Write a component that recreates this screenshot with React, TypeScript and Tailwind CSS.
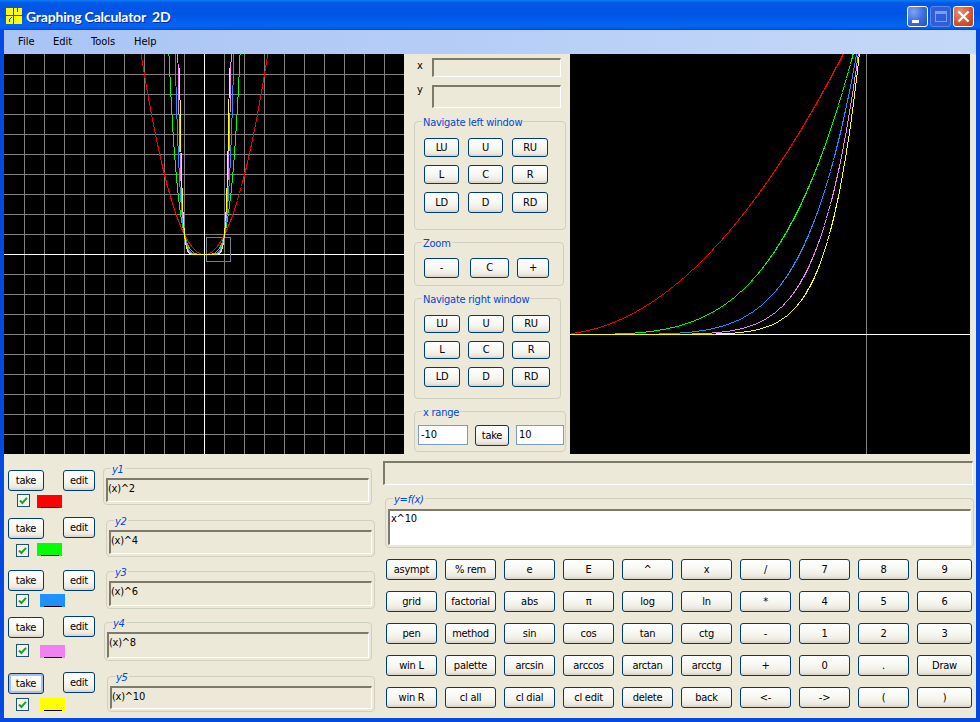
import React from "react";

const FONT = "font-['DejaVu_Sans_Condensed','DejaVu_Sans',sans-serif]";
const BTN =
  "flex items-center justify-center rounded-[3px] border border-[#003c74] bg-[linear-gradient(180deg,#ffffff_0%,#f6f6f1_55%,#ece9df_85%,#d6d0c5_100%)] text-[11px] tracking-[-0.25px] leading-none text-black pb-[1px]";
const SUNKEN =
  "border-t-2 border-l-2 border-r border-b border-t-[#7c7a6a] border-l-[#7c7a6a] border-r-white border-b-white";
const GROUP = "relative rounded-[4px] border border-[#d0d0bf]";
const LEGEND =
  "absolute -top-[6px] left-[7px] bg-[#ece9d8] px-[1px] text-[11px] tracking-[-0.25px] leading-[14px] text-[#0046d5]";

function Btn({ c, children }: { c: string; children: React.ReactNode }) {
  return <div className={`${BTN} ${c}`}>{children}</div>;
}

const COLORS = ["#ff0000", "#00ff00", "#1e90ff", "#ee82ee", "#ffff00"];
const POWERS = [2, 4, 6, 8, 10];

function leftPoints(n: number) {
  const pts: string[] = [];
  for (let px = -70; px <= 70; px++) {
    const y = 200 - 20 * Math.pow(px / 20, n);
    if (y < -30) continue;
    pts.push(`${200 + px + 0.5},${Math.round(y) + 0.5}`);
  }
  return pts.join(" ");
}

function rightPoints(n: number) {
  const pts: string[] = [];
  for (let px = 0; px <= 300; px++) {
    const u = (px + 17) / 310;
    const y = 280 - 321 * Math.pow(u, n);
    if (y < -30) continue;
    pts.push(`${px + 0.5},${Math.round(y) + 0.5}`);
  }
  return pts.join(" ");
}

function LeftCanvas() {
  const lines = [];
  for (let i = 1; i < 20; i++) {
    if (i === 10) continue;
    lines.push(<line key={`v${i}`} x1={i * 20 + 0.5} y1={0} x2={i * 20 + 0.5} y2={400} stroke="#808080" />);
    lines.push(<line key={`h${i}`} x1={0} y1={i * 20 + 0.5} x2={400} y2={i * 20 + 0.5} stroke="#808080" />);
  }
  return (
    <svg width={400} height={400} className="block shrink-0 bg-black" shapeRendering="crispEdges">
      {lines}
      <line x1={200.5} y1={0} x2={200.5} y2={400} stroke="#ffffff" />
      <line x1={0} y1={200.5} x2={400} y2={200.5} stroke="#ffffff" />
      <rect x={202.5} y={183.5} width={24} height={24} fill="none" stroke="#708090" />
      {POWERS.map((n, i) => (
        <polyline key={n} points={leftPoints(n)} fill="none" stroke={COLORS[i]} />
      ))}
    </svg>
  );
}

function RightCanvas() {
  return (
    <svg width={400} height={400} className="block shrink-0 bg-black" shapeRendering="crispEdges">
      <line x1={296.5} y1={0} x2={296.5} y2={400} stroke="#808080" />
      <line x1={0} y1={280.5} x2={400} y2={280.5} stroke="#ffffff" />
      {POWERS.map((n, i) => (
        <polyline key={n} points={rightPoints(n)} fill="none" stroke={COLORS[i]} />
      ))}
    </svg>
  );
}

function Check({ c }: { c: string }) {
  return (
    <div className={`flex h-[13px] w-[13px] shrink-0 items-center justify-center border border-[#1c5180] bg-[#f4f4ee] ${c}`}>
      <svg width={9} height={9} viewBox="0 0 9 9">
        <path d="M1 4.5 L3.4 7 L8 1.8" fill="none" stroke="#21a121" strokeWidth={2} />
      </svg>
    </div>
  );
}

type FnProps = {
  name: string;
  text: string;
  color: string;
  rowH: string;
  takeC: string;
  editC: string;
  checkC: string;
  swatchC: string;
  groupC: string;
  active?: boolean;
};

function Fn({ name, text, color, rowH, takeC, editC, checkC, swatchC, groupC, active }: FnProps) {
  return (
    <div className={`flex items-start ${rowH}`}>
      <div className="flex w-[96px] shrink-0 flex-col">
        <div className="flex h-[28px] items-start">
          <Btn
            c={`ml-[4px] h-[21px] w-[36px] ${takeC} ${active ? "shadow-[inset_0_0_0_2px_#a4c0ee]" : ""}`}
          >
            take
          </Btn>
          <Btn c={`ml-[19px] h-[21px] w-[32px] ${editC}`}>edit</Btn>
        </div>
        <div className="flex items-start">
          <Check c={checkC} />
          <div className={`flex h-[13px] w-[25px] items-end justify-center ${swatchC} ${color}`}>
            <div className="h-px w-[18px] bg-black" />
          </div>
        </div>
      </div>
      <div className={`${GROUP} flex flex-col px-[2px] pb-[2px] pt-[9px] ${groupC}`}>
        <span className={`${LEGEND} italic`}>{name}</span>
        <div className={`${SUNKEN} flex-1 pt-[1px] text-[11px] tracking-[-0.25px] leading-[16px] text-black`}>{text}</div>
      </div>
    </div>
  );
}

function NavRow({ c, labels, w }: { c: string; labels: string[]; w: string[] }) {
  return (
    <div className={`flex ${c}`}>
      {labels.map((l, i) => (
        <Btn key={l} c={w[i]}>
          {l}
        </Btn>
      ))}
    </div>
  );
}

const KEYS = [
  "asympt", "% rem", "e", "E", "^", "x", "/", "7", "8", "9",
  "grid", "factorial", "abs", "π", "log", "ln", "*", "4", "5", "6",
  "pen", "method", "sin", "cos", "tan", "ctg", "-", "1", "2", "3",
  "win L", "palette", "arcsin", "arccos", "arctan", "arcctg", "+", "0", ".", "Draw",
  "win R", "cl all", "cl dial", "cl edit", "delete", "back", "<-", "->", "(", ")",
];

export default function App() {
  const lw = ["h-full w-[35px]", "ml-[9px] h-full w-[35px]", "ml-[9px] h-full w-[36px]"];
  const rw = ["h-full w-[36px]", "ml-[8px] h-full w-[36px]", "ml-[8px] h-full w-[38px]"];
  return (
    <div className={`flex h-[722px] w-[980px] flex-col overflow-hidden bg-[#0349e2] ${FONT}`}>
      {/* Title bar */}
      <div className="flex h-[30px] shrink-0 items-center justify-between bg-[linear-gradient(180deg,#0a7cf0_0%,#0358e8_10%,#0054e3_45%,#0464f2_85%,#0359ee_95%,#0342d2_100%)] pl-[6px] pr-[6px]">
        <div className="flex items-center">
          <svg width={16} height={16} viewBox="0 0 16 16" className="mt-[2px]" shapeRendering="crispEdges">
            <rect width={16} height={16} fill="#ffff00" />
            <path d="M7 0H8V16H7ZM0 7H16V8H0Z" fill="#0046d5" />
            <path d="M3 14H4V11H5V10H6V9H5V10H4V11H3Z" fill="#0046d5" />
            <path d="M11 0H12V4H11Z" fill="#0046d5" />
          </svg>
          <span className="ml-[4px] mt-[2px] font-['Lato',sans-serif] text-[14px] font-bold tracking-[-0.2px] text-white [text-shadow:1px_1px_0_#0a2fa8] whitespace-pre">
            Graphing Calculator  2D
          </span>
        </div>
        <div className="mt-[3px] flex items-center gap-[2px]">
          <div className="flex h-[21px] w-[21px] items-end rounded-[3px] border border-white bg-[radial-gradient(circle_at_30%_25%,#7fa4f2_0%,#3c6fe0_50%,#1f4fd0_100%)] pb-[3px] pl-[4px]">
            <div className="h-[3px] w-[7px] bg-white" />
          </div>
          <div className="flex h-[21px] w-[21px] items-center justify-center rounded-[3px] border border-[#5d85e8] bg-[#2e5fd9]">
            <div className="h-[11px] w-[12px] border border-[#7d9df0] border-t-[3px]" />
          </div>
          <div className="flex h-[21px] w-[21px] items-center justify-center rounded-[3px] border border-white bg-[radial-gradient(circle_at_30%_25%,#e89078_0%,#d6582f_55%,#b83a1a_100%)]">
            <svg width={13} height={13} viewBox="0 0 13 13">
              <path d="M1.5 1.5 L11.5 11.5 M11.5 1.5 L1.5 11.5" stroke="#ffffff" strokeWidth={2.2} />
            </svg>
          </div>
        </div>
      </div>

      {/* Client area */}
      <div className="mx-[4px] mb-[4px] flex h-[688px] flex-col bg-[#ece9d8]">
        {/* Menu */}
        <div className="flex h-[24px] shrink-0 items-center bg-[linear-gradient(90deg,#a9c4f5_0%,#c4d8f8_100%)] pl-[14px] text-[11px] text-black">
          <span className="w-[35px]">File</span>
          <span className="w-[38px]">Edit</span>
          <span className="w-[43px]">Tools</span>
          <span>Help</span>
        </div>

        {/* Upper row */}
        <div className="flex h-[400px] shrink-0">
          <LeftCanvas />
          <div className="flex w-[166px] shrink-0 flex-col">
            <div className="mt-[4px] flex h-[19px]">
              <span className="ml-[13px] w-[15px] pt-[1px] text-[11px] leading-[14px] text-black">x</span>
              <div className={`${SUNKEN} h-[19px] w-[129px]`} />
            </div>
            <div className="mt-[8px] flex h-[23px]">
              <span className="-mt-[2px] ml-[13px] w-[15px] text-[11px] leading-[14px] text-black">y</span>
              <div className={`${SUNKEN} h-[23px] w-[129px]`} />
            </div>

            <div className={`${GROUP} ml-[10px] mt-[13px] h-[109px] w-[152px] pl-[9px] pt-[16px]`}>
              <span className={LEGEND}>Navigate left window</span>
              <NavRow c="h-[19px]" labels={["LU", "U", "RU"]} w={lw} />
              <NavRow c="mt-[8px] h-[19px]" labels={["L", "C", "R"]} w={lw} />
              <NavRow c="mt-[8px] h-[21px]" labels={["LD", "D", "RD"]} w={lw} />
            </div>

            <div className={`${GROUP} ml-[10px] mt-[12px] h-[44px] w-[150px] pl-[9px] pt-[15px]`}>
              <span className={LEGEND}>Zoom</span>
              <div className="flex h-[20px]">
                <Btn c="h-full w-[35px]">-</Btn>
                <Btn c="ml-[11px] h-full w-[39px]">C</Btn>
                <Btn c="ml-[8px] h-full w-[32px]">+</Btn>
              </div>
            </div>

            <div className={`${GROUP} ml-[10px] mt-[12px] h-[101px] w-[147px] pl-[9px] pt-[16px]`}>
              <span className={LEGEND}>Navigate right window</span>
              <NavRow c="h-[18px]" labels={["LU", "U", "RU"]} w={rw} />
              <NavRow c="mt-[8px] h-[18px]" labels={["L", "C", "R"]} w={rw} />
              <NavRow c="mt-[8px] h-[20px]" labels={["LD", "D", "RD"]} w={rw} />
            </div>

            <div className={`${GROUP} ml-[10px] mt-[12px] h-[41px] w-[152px] pl-[3px] pt-[13px]`}>
              <span className={LEGEND}>x range</span>
              <div className="flex items-start">
                <div className="flex h-[20px] w-[50px] items-center border border-[#7f9db9] bg-white pl-[2px] text-[11px] text-black">
                  -10
                </div>
                <Btn c="ml-[7px] h-[21px] w-[34px]">take</Btn>
                <div className="ml-[7px] flex h-[20px] w-[48px] items-center border border-[#7f9db9] bg-white pl-[2px] text-[11px] text-black">
                  10
                </div>
              </div>
            </div>
          </div>
          <RightCanvas />
        </div>

        {/* Lower row */}
        <div className="flex h-[264px] shrink-0">
          <div className="w-[379px] shrink-0 pt-[12px]">
            <Fn
              name="y1"
              text="(x)^2"
              color="bg-[#ff0000]"
              rowH="h-[49px]"
              takeC="mt-[4px]"
              editC="mt-[4px]"
              checkC="ml-[13px]"
              swatchC="ml-[7px] mt-[1px]"
              groupC="ml-[3px] mt-[2px] h-[37px] w-[269px]"
            />
            <Fn
              name="y2"
              text="(x)^4"
              color="bg-[#00ff00]"
              rowH="h-[51px]"
              takeC="mt-[3px]"
              editC="mt-[2px]"
              checkC="ml-[12px] mt-[1px]"
              swatchC="ml-[8px]"
              groupC="ml-[6px] mt-[5px] h-[37px] w-[269px]"
            />
            <Fn
              name="y3"
              text="(x)^6"
              color="bg-[#1e90ff]"
              rowH="h-[49px]"
              takeC="mt-[4px]"
              editC="mt-[4px]"
              checkC="ml-[12px]"
              swatchC="ml-[11px]"
              groupC="ml-[6px] mt-[5px] h-[38px] w-[269px]"
            />
            <Fn
              name="y4"
              text="(x)^8"
              color="bg-[#ee82ee]"
              rowH="h-[55px]"
              takeC="mt-[2px]"
              editC="mt-[1px]"
              checkC="ml-[12px] mt-[1px]"
              swatchC="ml-[11px] mt-[2px]"
              groupC="ml-[4px] mt-[7px] h-[39px] w-[268px]"
            />
            <Fn
              name="y5"
              text="(x)^10"
              color="bg-[#ffff00]"
              rowH="h-[48px]"
              takeC="mt-[3px]"
              editC="mt-[2px]"
              checkC="ml-[12px]"
              swatchC="ml-[11px]"
              groupC="ml-[7px] mt-[6px] h-[36px] w-[268px]"
              active
            />
          </div>
          <div className="flex-1 pt-[7px]">
            <div className={`${SUNKEN} h-[24px] w-[590px]`} />
            <div className={`${GROUP} ml-[2px] mt-[13px] flex h-[50px] w-[589px] flex-col px-[2px] pb-[2px] pt-[10px]`}>
              <span className={`${LEGEND} italic`}>y=f(x)</span>
              <div className={`${SUNKEN} flex-1 bg-white pl-[1px] text-[11px] tracking-[-0.25px] leading-[16px] text-black`}>x^10</div>
            </div>
            <div className="ml-[3px] mt-[11px] grid grid-cols-[repeat(9,51px)_55px] gap-x-[8px] gap-y-[11px]">
              {KEYS.map((k) => (
                <Btn key={k} c="h-[21px]">
                  {k}
                </Btn>
              ))}
            </div>
          </div>
        </div>
      </div>
    </div>
  );
}
